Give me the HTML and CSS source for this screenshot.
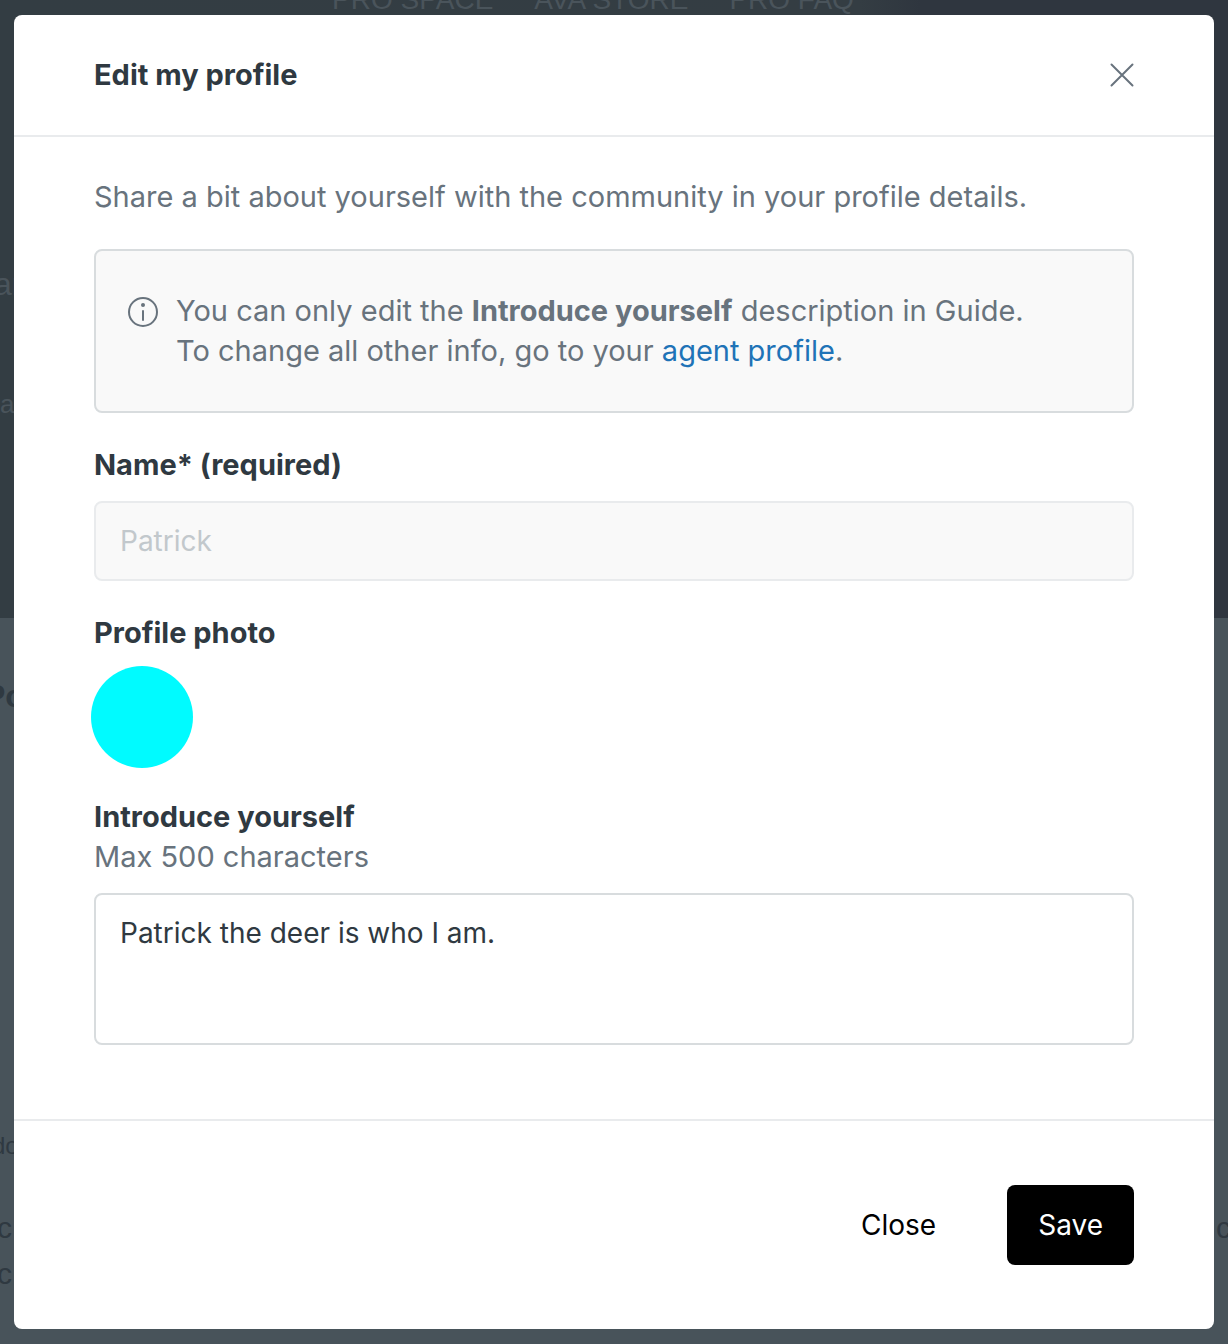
FILE: index.html
```html
<!DOCTYPE html>
<html lang="en">
<head>
  <meta charset="UTF-8">
  <meta name="viewport" content="width=device-width, initial-scale=1.0">
  <title>Edit my profile</title>
  <link rel="stylesheet" href="styles.css">
</head>
<body>
  <!-- Dimmed page behind the modal -->
  <div class="page" aria-hidden="true">
    <div class="page-hero">
      <div class="page-nav">
        <span>PRO SPACE</span>
        <span>AVA STORE</span>
        <span>PRO FAQ</span>
      </div>
      <div class="page-heading">ar</div>
      <div class="page-search">a</div>
    </div>
    <div class="page-content">
      <div class="page-title">Po</div>
      <div class="page-meta">do</div>
      <div class="page-row"><span>c</span><span>c</span></div>
      <div class="page-row"><span>c</span></div>
    </div>
  </div>

  <div class="modal" role="dialog" aria-modal="true" aria-labelledby="modalTitle">
    <div class="modal-header">
      <h1 id="modalTitle">Edit my profile</h1>
      <button type="button" class="icon-button" aria-label="Close dialog">
        <svg width="24" height="24" viewBox="0 0 24 24" fill="none" stroke="currentColor" stroke-width="2" stroke-linecap="round">
          <path d="M1.5 1.5l21 21M22.5 1.5l-21 21"/>
        </svg>
      </button>
    </div>

    <form id="profileForm" class="modal-body">
      <p>Share a bit about yourself with the community in your profile details.</p>

      <!-- Notice -->
      <div class="notice">
        <svg class="notice-icon" width="32" height="32" viewBox="0 0 32 32" fill="none" stroke="currentColor" stroke-width="2" stroke-linecap="round">
          <circle cx="16" cy="16" r="14"/>
          <path d="M16 15v9"/>
          <circle cx="16" cy="9" r="2" fill="currentColor" stroke="none"/>
        </svg>
        <p>You can only edit the <strong>Introduce yourself</strong> description in Guide.<br>To change all other info, go to your <a href="#">agent profile</a>.</p>
      </div>

      <!-- Name -->
      <div class="form-group">
        <label for="name">Name* (required)</label>
        <input type="text" id="name" name="name" value="Patrick" disabled>
      </div>

      <!-- Profile photo -->
      <div class="form-group">
        <h2>Profile photo</h2>
        <div class="avatar"></div>
      </div>

      <!-- Introduce yourself -->
      <div class="form-group">
        <div>
          <label for="intro">Introduce yourself</label>
          <p id="introHint">Max 500 characters</p>
        </div>
        <textarea id="intro" name="intro" maxlength="500" aria-describedby="introHint">Patrick the deer is who I am.</textarea>
      </div>
    </form>

    <div class="modal-footer">
      <button type="button" class="button">Close</button>
      <button type="submit" form="profileForm" class="button button-primary">Save</button>
    </div>
  </div>
</body>
</html>
```
FILE: styles.css
```css
* {
  box-sizing: border-box;
}

body {
  margin: 0;
  padding: 15px 14px;
  font-family: Inter, "Liberation Sans", sans-serif;
  font-size: 28px;
  line-height: 40px;
  color: #68737d;
}

h1,
h2,
p,
label {
  margin: 0;
  font-size: 29px;
}

/* Page behind the modal */
.page {
  position: fixed;
  inset: 0;
  overflow: hidden;
  font-family: "Liberation Sans", Arial, sans-serif;
  background-color: #48535a;
}

.page-hero {
  height: 618px;
  overflow: hidden;
  color: #4a545b;
  background: linear-gradient(to right, #333d43, #343d43 70%, #2f363f 75%, #2f363f);
}

.page-nav {
  display: flex;
  gap: 41px;
  height: 276px;
  margin-top: -12px;
  padding-left: 332px;
  font-size: 28px;
  line-height: 24px;
}

.page-heading {
  width: 20px;
  height: 120px;
  margin-left: -6px;
  font-size: 32px;
}

.page-search {
  font-size: 26px;
}

.page-content {
  padding-top: 58px;
  color: #2f3941;
}

.page-title {
  width: 28px;
  height: 450px;
  margin-left: -16px;
  font-size: 32px;
  font-weight: bold;
}

.page-meta {
  height: 82px;
  margin-left: -8px;
  font-size: 24px;
}

.page-row {
  display: flex;
  justify-content: space-between;
  height: 46px;
  margin: 0 -3px;
  font-size: 30px;
}

/* Modal */
.modal {
  position: relative;
  border-radius: 8px;
  background-color: #fff;
}

.modal-header {
  display: flex;
  justify-content: space-between;
  align-items: center;
  padding: 40px 80px;
  border-bottom: 2px solid #e9ebed;
}

h1,
h2,
label {
  display: block;
  font-weight: 700;
  color: #2f3941;
}

.icon-button {
  display: flex;
  padding: 0;
  border: none;
  background: none;
  color: #68737d;
  cursor: pointer;
}

.modal-body {
  display: flex;
  flex-direction: column;
  gap: 32px;
  padding: 40px 80px 74px;
}

.notice {
  display: flex;
  gap: 17px;
  padding: 40px 31px;
  border: 2px solid #d8dcde;
  border-radius: 8px;
  background-color: #f9f9f9;
}

.notice-icon {
  flex: none;
  margin-top: 5px;
}

.notice strong {
  font-weight: 700;
}

.notice a {
  color: #1f73b7;
  text-decoration: none;
}

.notice a:hover {
  text-decoration: underline;
}

.form-group {
  display: flex;
  flex-direction: column;
  gap: 16px;
}

input,
textarea {
  display: block;
  width: 100%;
  padding: 18px 24px;
  border: 2px solid #d8dcde;
  border-radius: 8px;
  font: inherit;
  color: #2f3941;
  background-color: #fff;
}

input:disabled {
  border-color: #e9ebed;
  background-color: #f9f9f9;
  color: #c2c8cc;
}

textarea {
  height: 152px;
  resize: none;
}

.avatar {
  width: 96px;
  height: 96px;
  border-radius: 50%;
  background-color: #00fbff;
  box-shadow: 0 0 0 3px #00fbff;
}

.modal-footer {
  display: flex;
  justify-content: flex-end;
  gap: 40px;
  padding: 64px 80px;
  border-top: 2px solid #e9ebed;
}

.button {
  padding: 20px 31px;
  border: none;
  border-radius: 8px;
  font: inherit;
  background-color: #fff;
  color: #000;
  cursor: pointer;
}

.button-primary {
  background-color: #000;
  color: #fff;
}
```
